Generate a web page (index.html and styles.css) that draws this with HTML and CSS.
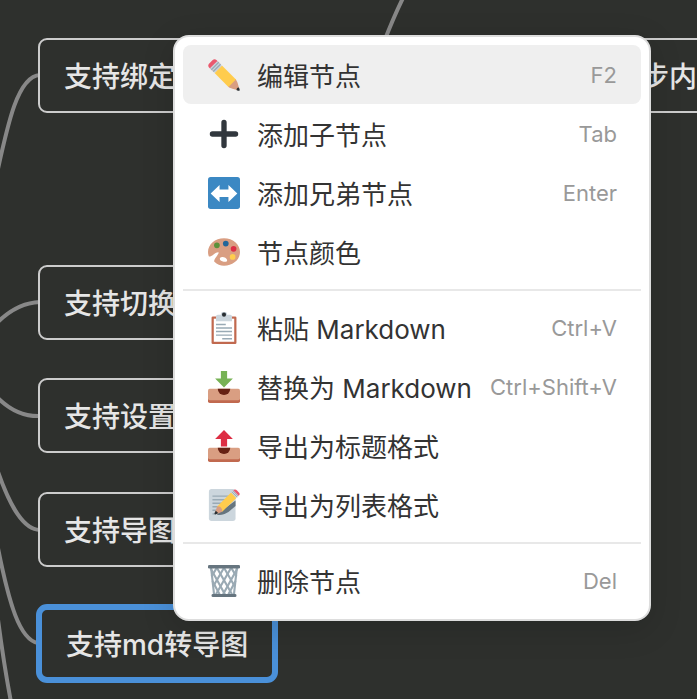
FILE: index.html
```html
<!DOCTYPE html>
<html lang="zh-CN">
<head>
  <meta charset="UTF-8" />
  <meta name="viewport" content="width=device-width, initial-scale=1.0" />
  <title>思维导图</title>
  <link rel="stylesheet" href="styles.css">
</head>
<body>
  <main class="canvas">
    <svg class="links" aria-hidden="true">
      <path d="M40 75 C18 76 8 122 -4 178" />
      <path d="M40 302 Q16 303 -4 324" />
      <path d="M40 416 Q16 417 -4 396" />
      <path d="M40 530 C24 530 10 508 -4 466" />
      <path d="M38 643 C20 640 9 606 -4 538" />
      <path d="M-4 604 Q3 660 11 702" />
      <path d="M404 -4 Q394 16 384 42" />
    </svg>

    <div class="node node-bind"><span>支持绑定</span><span>步内</span></div>
    <div class="node node-switch">支持切换</div>
    <div class="node node-setting">支持设置</div>
    <div class="node node-map">支持导图</div>
    <div class="node node-md selected">支持md转导图</div>

    <div class="menu" role="menu">
      <button class="item active" type="button" role="menuitem">
        <svg class="icon" viewBox="0 0 36 36">
          <path fill="#D99E82" d="M35.2 33.6c-.6-2.1-1.7-6.1-2.3-7.6-.5-1.2-1-2.4-1.5-3-.6-.6-1.6-.5-2.2.1 0 0-2.5 1.7-3.3 2.8-1.1.9-2.8 3.3-2.8 3.3-.6.6-.6 1.6-.1 2.2.6.6 1.8 1 3 1.5 1.5.6 5.5 1.7 7.6 2.3.4.1 1.7-1.2 1.6-1.6z" />
          <path fill="#EA596E" d="M13.6 5.3c1.2 1.2 1.2 3 0 4.2l-4.1 4.1c-1.2 1.2-3 1.2-4.2 0L1.1 9.5C0 8.3 0 6.5 1.1 5.3l4.2-4.2C6.5 0 8.3 0 9.5 1.1z" />
          <path fill="#FFCC4D" d="M31.4 23L23 31.4 7.4 15.7l8.3-8.3z" />
          <path fill="#292F33" d="M32.1 34.8s2.7 1.5 3.4.7-.8-3.4-.8-3.4-2.5 0-2.6 2.7z" />
          <path fill="#CCD6DD" d="M2.2 10.5l8.3-8.3 5.2 5.2-8.3 8.3z" />
          <path fill="#99AAB5" d="M3.2 11.6l8.4-8.4 1 1.1-8.3 8.3zM5.3 13.6l8.3-8.3 1.1 1.1-8.3 8.3z" />
        </svg>
        <span class="label">编辑节点</span>
        <kbd>F2</kbd>
      </button>
      <button class="item" type="button" role="menuitem">
        <svg class="icon" viewBox="0 0 36 36">
          <path fill="#31373D" d="M31 15H21V5a3 3 0 0 0-6 0v10H5a3 3 0 0 0 0 6h10v10a3 3 0 0 0 6 0V21h10a3 3 0 0 0 0-6z" />
        </svg>
        <span class="label">添加子节点</span>
        <kbd>Tab</kbd>
      </button>
      <button class="item" type="button" role="menuitem">
        <svg class="icon" viewBox="0 0 36 36">
          <rect width="36" height="36" rx="3" fill="#3B88C3" />
          <path fill="#fff" d="M3 18.5L13 9v5h10V9l10 9.5L23 28v-5.5H13V28z" />
        </svg>
        <span class="label">添加兄弟节点</span>
        <kbd>Enter</kbd>
      </button>
      <button class="item" type="button" role="menuitem">
        <svg class="icon" viewBox="0 0 36 36">
          <path fill="#D99E82" d="M18 2.5C8 2.5 0 9.5 0 18c0 1.8.3 3.5 1 5.1 1.4.3 2.8-.5 5.3-2.3 2.3-1.6 4.5-2.8 5.5-2.3.8.5-.6 2.2-2 4.2-1.7 2.4-3.6 4.8-2.6 6.300 3 2.8 6.600 4.5 10.800 4.5 10 0 18-7 18-15.500S28 2.500 18 2.500zm2.300 26.400c-2.300.3-5.500-.4-6.600-1.900-1.200-1.800.3-3.600 2.600-3.400 2.200.2 4.600 1.300 5.100 3 .3 1.100 0 2.100-1.100 2.300z" />
          <circle cx="10" cy="10.5" r="3.2" fill="#5C913B" />
          <circle cx="20" cy="8.5" r="3.2" fill="#226699" />
          <circle cx="28.8" cy="14.4" r="3.2" fill="#DD2E44" />
          <circle cx="27.7" cy="23.5" r="3.2" fill="#FFCC4D" />
        </svg>
        <span class="label">节点颜色</span>
      </button>
      <hr>
      <button class="item" type="button" role="menuitem">
        <svg class="icon" viewBox="0 0 36 36">
          <rect x="4" y="5" width="28" height="31" rx="1.5" fill="#C1694F" />
          <path fill="#fff" d="M6.5 7.5h23v26h-23z" />
          <path fill="#CCD6DD" d="M9 5a2 2 0 0 1 2-2h3.5a3.5 3.5 0 0 1 7 0H25a2 2 0 0 1 2 2v5.5H9z" />
          <circle cx="18" cy="3" r="2.3" fill="#292F33" />
          <path stroke="#99AAB5" stroke-width="1.6" d="M9 14h11M9 18h18M9 22h18M9 26h18M16 30h11" />
        </svg>
        <span class="label">粘贴 Markdown</span>
        <kbd>Ctrl+V</kbd>
      </button>
      <button class="item" type="button" role="menuitem">
        <svg class="icon" viewBox="0 0 36 36">
          <rect y="24" width="36" height="12" rx="2" fill="#C1694F" />
          <path fill="#D99E82" d="M0 22a2 2 0 0 1 2-2h32a2 2 0 0 1 2 2v9a2 2 0 0 1-2 2H2a2 2 0 0 1-2-2z" />
          <path fill="#662113" d="M11 20h14a7 7 0 0 1-14 0z" />
          <path fill="#77B255" d="M14.5 0h7v8.5H28l-10 10-10-10h6.5z" />
        </svg>
        <span class="label">替换为 Markdown</span>
        <kbd>Ctrl+Shift+V</kbd>
      </button>
      <button class="item" type="button" role="menuitem">
        <svg class="icon" viewBox="0 0 36 36">
          <rect y="24" width="36" height="12" rx="2" fill="#C1694F" />
          <path fill="#D99E82" d="M0 22a2 2 0 0 1 2-2h32a2 2 0 0 1 2 2v9a2 2 0 0 1-2 2H2a2 2 0 0 1-2-2z" />
          <path fill="#662113" d="M11 20h14a7 7 0 0 1-14 0z" />
          <path fill="#DD2E44" d="M18 0l10 10h-6.5v8.5h-7V10H8z" />
        </svg>
        <span class="label">导出为标题格式</span>
      </button>
      <button class="item" type="button" role="menuitem">
        <svg class="icon" viewBox="0 0 36 36">
          <rect x="1" width="30" height="36" rx="3" fill="#CCD6DD" />
          <path stroke="#99AAB5" stroke-width="1.6" d="M5 8h19M5 12h16M5 16h13M5 20h10M5 24h6M5 28h4" />
          <path fill="#66757F" d="M31 13v6l-8 7c-5 3-9 4-13 3l3-3z" />
          <path fill="#FFCC4D" d="M26 4l6 6-16 15.5-6-5.5z" />
          <path fill="#D99E82" d="M10.5 19.5c3-.5 6 2.5 5.500 6L9 28.5l-1.5-1.5z" />
          <path fill="#292F33" d="M8.8 24.5l2.7 2.5c-1.3.9-3.3 2-4 1.5-.7-.7.3-2.7 1.3-4z" />
          <path fill="#CCD6DD" d="M26 4l2.5-2.5 6 6L32 10z" />
          <path stroke="#99AAB5" stroke-width="1" d="M26.8 3.2l6 6M28 2l6 6" />
          <path fill="#EA596E" d="M28.5 1.5c1.5-1.5 3-1 4.2.2l2.1 2.1c1.2 1.2 1.2 2.7-.3 3.7z" />
        </svg>
        <span class="label">导出为列表格式</span>
      </button>
      <hr>
      <button class="item" type="button" role="menuitem">
        <svg class="icon" viewBox="0 0 36 36">
          <g fill="none" stroke="#9AAAB4" stroke-width="2.4">
            <path d="M3.5 3l3.3 30M32.5 3l-3.3 30" />
            <path d="M3 4l16 29M10 3l17 30M18 3l12 21M26 3l6 10M5 18l8 15" />
            <path d="M33 4L17 33M26 3L9 33M18 3L6 24M10 3L4 13M31 18l-8 15" />
          </g>
          <rect width="36" height="4" rx="1.5" fill="#66757F" />
          <rect x="4" y="32.5" width="28" height="3.5" rx="1.5" fill="#66757F" />
        </svg>
        <span class="label">删除节点</span>
        <kbd>Del</kbd>
      </button>
    </div>
  </main>
</body>
</html>
```
FILE: styles.css
```css
body {
  margin: 0;
  font-family: Inter, "Noto Sans CJK SC", sans-serif;
}
.canvas {
  position: relative;
  min-height: 100vh;
  overflow: hidden;
  background: #2e302d;
}
.links {
  position: absolute;
  width: 100%;
  height: 100%;
  fill: none;
  stroke: #888;
  stroke-width: 4;
}

/* mind map nodes */
.node {
  position: absolute;
  left: 38px;
  display: flex;
  justify-content: space-between;
  padding: 18px 24px 14px;
  border: 2px solid #ccc;
  border-radius: 9px;
  background: #2e302d;
  color: #e6e6e6;
  font-size: 28px;
  font-weight: 500;
  line-height: 39px;
  white-space: nowrap;
}
.node-bind {
  top: 38px;
  right: -26px;
}
.node-switch {
  top: 265px;
}
.node-setting {
  top: 378px;
}
.node-map {
  top: 492px;
}
.node-md {
  top: 604px;
}
.node.selected {
  left: 36px;
  padding: 16px 24px 12px;
  border: 6px solid #4a90d9;
  border-radius: 11px;
}

/* context menu */
.menu {
  position: absolute;
  top: 35px;
  left: 173px;
  box-sizing: border-box;
  min-width: 478px;
  padding: 8px 8px 9px;
  border: 2px solid #ddd;
  border-radius: 16px;
  background: #fff;
  box-shadow: 0 8px 32px rgba(0,0,0,0.15);
}
.item {
  display: flex;
  align-items: center;
  width: 100%;
  height: 59px;
  padding: 0 24px 0 25px;
  border: 0;
  border-radius: 8px;
  background: none;
  color: #333;
  font: inherit;
  font-size: 26px;
  text-align: left;
  white-space: nowrap;
}
.item.active {
  background: #efefef;
}
.icon {
  width: 32px;
  height: 32px;
  margin-right: 17px;
}
.label {
  flex: 1;
}
kbd {
  margin-left: 16px;
  color: #999;
  font-family: inherit;
  font-size: 22px;
}
hr {
  height: 2px;
  margin: 8px 0 7px;
  border: 0;
  background: #e8e8e8;
}
```
